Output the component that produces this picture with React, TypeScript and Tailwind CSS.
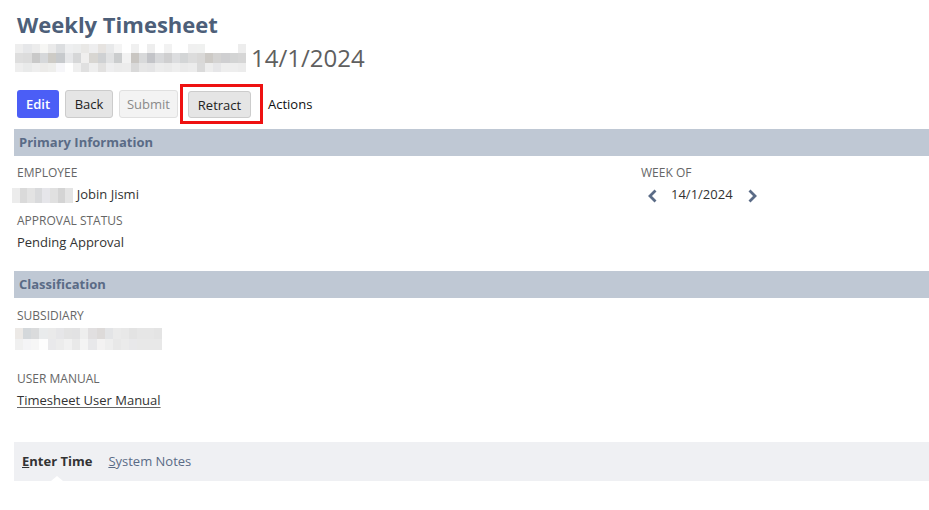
const subtitleBlur = [
  ['#eeeeee', '#e6e7e9', '#ececec', '#f6f6f4', '#eaeaea', '#dcdee0', '#eeeff0', '#eceded', '#e9e8e6', '#eeeeef', '#e6e3e0', '#e8e9ea', '#f4f4f4', '#ffffff', '#f0f0f0', '#ffffff', '#eeeeee', '#ffffff', '#f2f2f2', '#ffffff', '#ffffff', '#f0f0f0', '#f0f1f0', '#ffffff', '#ffffff', '#ffffff', '#ffffff', '#ededed'],
  ['#dedede', '#dcdcdc', '#c9c9c9', '#d6d8da', '#cdcbc6', '#c7cacd', '#e6e7e9', '#d6d7d8', '#f0efee', '#d8d6d2', '#cfd1d3', '#e1e2e3', '#cbcdce', '#f2f2f2', '#c9c6c2', '#d8d9da', '#c3c4c8', '#d7d8da', '#cfcfd0', '#dcdddf', '#d3d5d6', '#dcdcdc', '#d9d8d7', '#cdcac6', '#d4d3d2', '#cfcfd1', '#d3d4d4', '#d6d6d6'],
  ['#eeeeee', '#e9eaea', '#eeeeee', '#ecebe9', '#eeeeec', '#f6f6f9', '#ffffff', '#efefef', '#e0e0e0', '#eeeeee', '#e2e1e0', '#eeeeef', '#ebebeb', '#ececec', '#d9d9d9', '#e6e6e6', '#e4e4e5', '#ececec', '#eaeaea', '#eeeeee', '#eaeaea', '#ececec', '#dadada', '#ededed', '#e6e6e8', '#eeeeee', '#eeeeee', '#ececec'],
];

const employeeBlur = [['#ececec', '#dadada', '#e3e3e3', '#d9dadc', '#e6e6ea', '#e0e0e0', '#d4d4d4', '#e4e4e4']];

const subsidiaryBlur = [
  ['#ece9e6', '#d4d8db', '#dadbdc', '#e9ebec', '#eaeaea', '#e6e6e8', '#e3e3e3', '#e2e2e3', '#eeeeee', '#e1dfe0', '#dddad9', '#e3e4e6', '#eaeaea', '#e8e8e8', '#e3e3e3', '#e6e6e6', '#e6e6e6', '#e4e4e4'],
  ['#f0f0f0', '#f4f4f6', '#f6f6f6', '#fdfdfd', '#e9e9eb', '#ececec', '#f1f1f1', '#e9e9e9', '#f4f4f4', '#e8e8ea', '#f3f2f2', '#eeeeee', '#e8e8e8', '#ebebeb', '#e8e8ea', '#e8e8e8', '#e8e8e8', '#e8e8e8'],
];

function Mosaic({ rows, cell, rowH }: { rows: string[][]; cell: number; rowH: number }) {
  return (
    <div className="flex flex-col">
      {rows.map((row, i) => (
        <div key={i} className="flex">
          {row.map((c, j) => (
            <div key={j} style={{ backgroundColor: c, width: cell, height: rowH }} />
          ))}
        </div>
      ))}
    </div>
  );
}

function SectionHeader({ title }: { title: string }) {
  return (
    <div className="ml-[14px] h-[27px] bg-[#bfc8d4] flex items-center pl-[5px]">
      <span className="text-[13px] font-bold text-[#5a6b86]">{title}</span>
    </div>
  );
}

function Label({ children }: { children: React.ReactNode }) {
  return <div className="h-[16px] leading-[16px] text-[12px] text-[#666666] uppercase">{children}</div>;
}

export default function App() {
  return (
    <div className="w-[929px] h-[510px] bg-white overflow-hidden font-['Open_Sans',sans-serif]">
      <div className="pl-[17px] pt-[10px]">
        <h1 className="text-[22px] leading-[28px] font-bold text-[#4d5f79]">Weekly Timesheet</h1>
        <div className="mt-[6px] h-[28px] flex items-center -ml-[2px]">
          <Mosaic rows={subtitleBlur} cell={8.25} rowH={9.33} />
          <span className="ml-[5px] text-[24px] leading-[28px] text-[#5f5f5f]">14/1/2024</span>
        </div>
      </div>

      <div className="mt-[12px] h-[40px] flex items-center pl-[17px]">
        <button className="h-[28px] w-[42px] pt-[2px] rounded-[3px] bg-[#4b5ef6] text-white text-[13px] font-semibold">Edit</button>
        <button className="ml-[6px] h-[28px] w-[48px] pt-[2px] rounded-[3px] bg-[#e5e5e5] border border-[#cccccc] text-[#222222] text-[13px]">Back</button>
        <button className="ml-[6px] h-[28px] w-[59px] pt-[2px] rounded-[3px] bg-[#f3f3f3] border border-[#e0e0e0] text-[#8a8a8a] text-[13px]">Submit</button>
        <div className="ml-[2px] h-[40px] border-[3px] border-[#ee1111] pl-[5px] pr-[9px] pt-[4px] pb-[3px]">
          <button className="h-[27px] w-[63px] pt-[2px] rounded-[3px] bg-[#e5e5e5] border border-[#cccccc] text-[#222222] text-[13px]">Retract</button>
        </div>
        <span className="ml-[5px] pt-[2px] text-[13px] text-[#111111]">Actions</span>
      </div>

      <div className="mt-[5px]">
        <SectionHeader title="Primary Information" />
        <div className="flex pt-[9px]">
          <div className="w-[641px] pl-[17px]">
            <Label>Employee</Label>
            <div className="mt-[6px] h-[16px] flex items-center -ml-[5px]">
              <Mosaic rows={employeeBlur} cell={7.6} rowH={15} />
              <span className="ml-[4px] text-[13px] text-[#333333]">Jobin Jismi</span>
            </div>
            <div className="mt-[10px]">
              <Label>Approval Status</Label>
            </div>
            <div className="mt-[5px] h-[16px] leading-[16px] text-[13px] text-[#333333]">Pending Approval</div>
          </div>
          <div>
            <Label>Week of</Label>
            <div className="mt-[6px] h-[16px] flex items-center">
              <svg width="12" height="14" viewBox="0 0 12 14" className="ml-[6px] mt-[2px]">
                <path d="M8.5 1.5 L3 7 L8.5 12.5" fill="none" stroke="#5a6b86" strokeWidth="2.8" />
              </svg>
              <span className="ml-[12px] text-[13px] text-[#333333]">14/1/2024</span>
              <svg width="12" height="14" viewBox="0 0 12 14" className="ml-[13px] mt-[2px]">
                <path d="M3.5 1.5 L9 7 L3.5 12.5" fill="none" stroke="#5a6b86" strokeWidth="2.8" />
              </svg>
            </div>
          </div>
        </div>
      </div>

      <div className="mt-[21px]">
        <SectionHeader title="Classification" />
        <div className="pl-[17px] pt-[10px]">
          <Label>Subsidiary</Label>
          <div className="mt-[4px] -ml-[2px]">
            <Mosaic rows={subsidiaryBlur} cell={8.17} rowH={11} />
          </div>
          <div className="mt-[21px]">
            <Label>User Manual</Label>
          </div>
          <div className="mt-[5px] h-[16px] leading-[16px] text-[13px] text-[#333333]">
            <a className="underline underline-offset-2 decoration-[#666666]">Timesheet User Manual</a>
          </div>
        </div>
      </div>

      <div className="mt-[34px] ml-[14px] h-[39px] bg-[#eff0f3] relative flex items-center pl-[8px]">
        <span className="text-[13px] font-bold text-[#333333]">
          <span className="underline">E</span>nter Time
        </span>
        <span className="ml-[16px] text-[13px] text-[#5a6b86]">
          <span className="underline">S</span>ystem Notes
        </span>
        <div className="absolute left-[37px] bottom-0 w-0 h-0 border-l-[6px] border-r-[6px] border-b-[5px] border-l-transparent border-r-transparent border-b-white" />
      </div>
    </div>
  );
}
